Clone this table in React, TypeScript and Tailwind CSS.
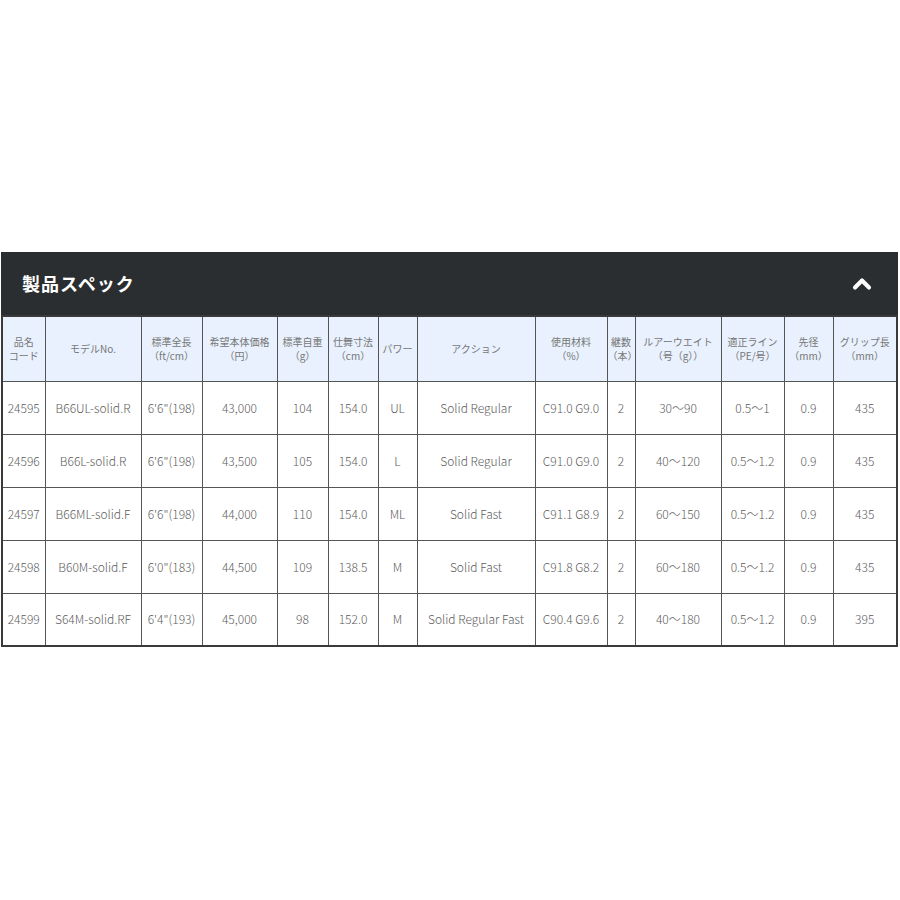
import { ChevronUp } from "lucide-react";

const cols = [43, 96, 61, 75, 51, 50, 39, 118, 72, 28, 86, 63, 49, 64];

const heads: [string, string?][] = [
  ["品名", "コード"],
  ["モデルNo."],
  ["標準全長", "（ft/cm）"],
  ["希望本体価格", "（円）"],
  ["標準自重", "（g）"],
  ["仕舞寸法", "（cm）"],
  ["パワー"],
  ["アクション"],
  ["使用材料", "（%）"],
  ["継数", "（本）"],
  ["ルアーウエイト", "（号（g））"],
  ["適正ライン", "（PE/号）"],
  ["先径", "（mm）"],
  ["グリップ長", "（mm）"],
];

const rows = [
  ["24595", "B66UL-solid.R", "6'6\"(198)", "43,000", "104", "154.0", "UL", "Solid Regular", "C91.0 G9.0", "2", "30〜90", "0.5〜1", "0.9", "435"],
  ["24596", "B66L-solid.R", "6'6\"(198)", "43,500", "105", "154.0", "L", "Solid Regular", "C91.0 G9.0", "2", "40〜120", "0.5〜1.2", "0.9", "435"],
  ["24597", "B66ML-solid.F", "6'6\"(198)", "44,000", "110", "154.0", "ML", "Solid Fast", "C91.1 G8.9", "2", "60〜150", "0.5〜1.2", "0.9", "435"],
  ["24598", "B60M-solid.F", "6'0\"(183)", "44,500", "109", "138.5", "M", "Solid Fast", "C91.8 G8.2", "2", "60〜180", "0.5〜1.2", "0.9", "435"],
  ["24599", "S64M-solid.RF", "6'4\"(193)", "45,000", "98", "152.0", "M", "Solid Regular Fast", "C90.4 G9.6", "2", "40〜180", "0.5〜1.2", "0.9", "395"],
];

export default function App() {
  return (
    <div
      className="w-[900px] h-[900px] bg-white pt-[252px] pl-[1px]"
      style={{ fontFamily: '"Noto Sans CJK JP", "Noto Sans", sans-serif' }}
    >
      <div className="w-[897px]">
        {/* 見出し */}
        <div className="h-[63px] bg-[#2b2e30] flex items-center justify-between pl-[21px] pr-[22px]">
          <h2 className="text-white text-[18px] font-bold tracking-[1px]">製品スペック</h2>
          <ChevronUp className="text-white w-[28px] h-[28px]" strokeWidth={3.5} />
        </div>

        {/* スペック表 */}
        <table className="table-fixed border-collapse w-[897px] border-2 border-[#3a3a3a] text-[#5c5c5c] text-center">
          <colgroup>
            {cols.map((w, i) => (
              <col key={i} style={{ width: w }} />
            ))}
          </colgroup>
          <thead>
            <tr className="h-[65px] bg-[#e8f1fd]">
              {heads.map(([a, b], i) => (
                <th key={i} className="border border-[#555] font-normal text-[10px] leading-[14px] text-[#777] px-0 whitespace-nowrap">
                  <div>{a}</div>
                  {b && <div>{b}</div>}
                </th>
              ))}
            </tr>
          </thead>
          <tbody>
            {rows.map((r, i) => (
              <tr key={i} className="h-[53px]">
                {r.map((c, j) => (
                  <td key={j} className="border border-[#555] text-[12px] font-light px-0 whitespace-nowrap">
                    {c}
                  </td>
                ))}
              </tr>
            ))}
          </tbody>
        </table>
      </div>
    </div>
  );
}
